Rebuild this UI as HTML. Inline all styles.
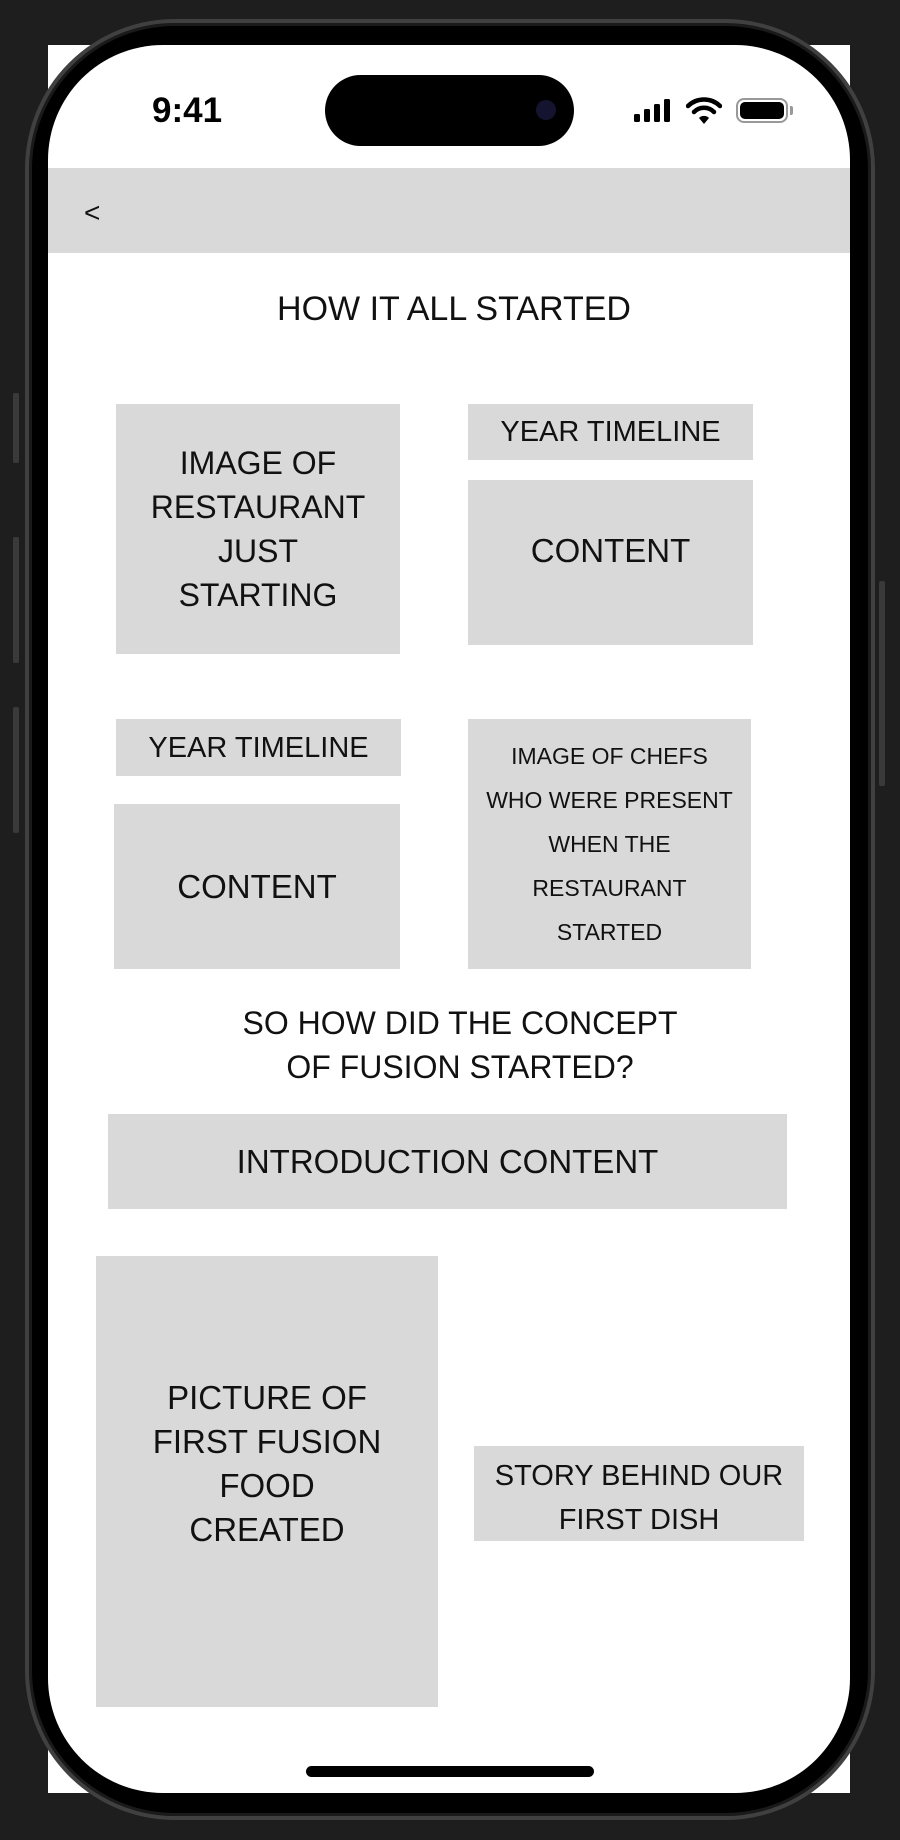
<!DOCTYPE html>
<html><head><meta charset="utf-8">
<style>
*{margin:0;padding:0;box-sizing:border-box}
body{width:900px;height:1840px;background:#1e1e1e;position:relative;overflow:hidden;font-family:"Liberation Sans",sans-serif;color:#111}
.abs{position:absolute}
.whitebg{left:48px;top:45px;width:802px;height:1748px;background:#fff}
.frame{left:25px;top:19px;width:850px;height:1801px;border-radius:150px;background:#000;border:4px solid #404040;box-shadow:inset 0 0 0 3px #1a1a1a}
.screen{left:48px;top:45px;width:802px;height:1748px;border-radius:115px;background:#fff;overflow:hidden}
.btn{background:#3a3a3a;border-radius:2px}
.box{position:absolute;background:#d9d9d9;display:flex;align-items:center;justify-content:center;text-align:center;font-size:32px;line-height:44px}
.t{position:absolute;text-align:center;font-size:32px;line-height:44px;left:0;width:802px}
</style></head><body>
<div class="abs whitebg"></div>
<div class="abs btn" style="left:13px;top:393px;width:6px;height:70px"></div>
<div class="abs btn" style="left:13px;top:537px;width:6px;height:126px"></div>
<div class="abs btn" style="left:13px;top:707px;width:6px;height:126px"></div>
<div class="abs btn" style="left:879px;top:581px;width:6px;height:205px"></div>
<div class="abs frame"></div>
<div class="abs screen">
  <div class="abs" style="left:104px;top:45px;font-size:35px;font-weight:bold;line-height:42px;color:#000">9:41</div>
  <div class="abs" style="left:277px;top:30px;width:249px;height:71px;border-radius:36px;background:#000"></div>
  <div class="abs" style="left:488px;top:55px;width:20px;height:20px;border-radius:10px;background:#141430"></div>
  <svg class="abs" style="left:586px;top:54px" width="46" height="24" viewBox="0 0 46 24">
    <rect x="0" y="15" width="6" height="8" rx="1.5"/><rect x="10" y="10" width="6" height="13" rx="1.5"/><rect x="20" y="5" width="6" height="18" rx="1.5"/><rect x="30" y="0" width="6" height="23" rx="1.5"/>
  </svg>
  <svg class="abs" style="left:638px;top:52px" width="36" height="28" viewBox="0 0 36 28">
    <path d="M2 9 A23 23 0 0 1 34 9" stroke="#000" stroke-width="4.5" fill="none" stroke-linecap="round"/>
    <path d="M8 15 A14 14 0 0 1 28 15" stroke="#000" stroke-width="4.5" fill="none" stroke-linecap="round"/>
    <path d="M13 21 L18 27 L23 21 A7 7 0 0 0 13 21Z" fill="#000"/>
  </svg>
  <div class="abs" style="left:688px;top:53px;width:52px;height:25px;border:2.5px solid #999;border-radius:8px;padding:2px"><div style="width:100%;height:100%;background:#000;border-radius:5px"></div></div>
  <div class="abs" style="left:742px;top:61px;width:3px;height:9px;background:#999;border-radius:0 2px 2px 0"></div>

  <div class="abs" style="left:0;top:123px;width:802px;height:85px;background:#d9d9d9"></div>
  <div class="abs" style="left:36px;top:151px;font-size:28px;line-height:34px;color:#111">&lt;</div>

  <div class="t" style="top:242px;left:5px;font-size:34px">HOW IT ALL STARTED</div>

  <div class="box" style="left:68px;top:359px;width:284px;height:250px">IMAGE OF<br>RESTAURANT<br>JUST<br>STARTING</div>
  <div class="box" style="left:420px;top:359px;width:285px;height:56px;font-size:29px">YEAR TIMELINE</div>
  <div class="box" style="left:420px;top:435px;width:285px;height:165px;padding-bottom:24px;font-size:33px">CONTENT</div>

  <div class="box" style="left:68px;top:674px;width:285px;height:57px;font-size:29px">YEAR TIMELINE</div>
  <div class="box" style="left:66px;top:759px;width:286px;height:165px;font-size:33px">CONTENT</div>
  <div class="box" style="left:420px;top:674px;width:283px;height:250px;font-size:23px">IMAGE OF CHEFS<br>WHO WERE PRESENT<br>WHEN THE<br>RESTAURANT<br>STARTED</div>

  <div class="t" style="top:956px;left:11px">SO HOW DID THE CONCEPT<br>OF FUSION STARTED?</div>

  <div class="box" style="left:60px;top:1069px;width:679px;height:95px;font-size:33px">INTRODUCTION CONTENT</div>

  <div class="box" style="left:48px;top:1211px;width:342px;height:451px;font-size:33px;padding-bottom:36px">PICTURE OF<br>FIRST FUSION<br>FOOD<br>CREATED</div>
  <div class="box" style="left:426px;top:1401px;width:330px;height:95px;font-size:29px;padding-top:8px">STORY BEHIND OUR<br>FIRST DISH</div>

  <div class="abs" style="left:258px;top:1721px;width:288px;height:11px;border-radius:6px;background:#000"></div>
</div>
</body></html>
